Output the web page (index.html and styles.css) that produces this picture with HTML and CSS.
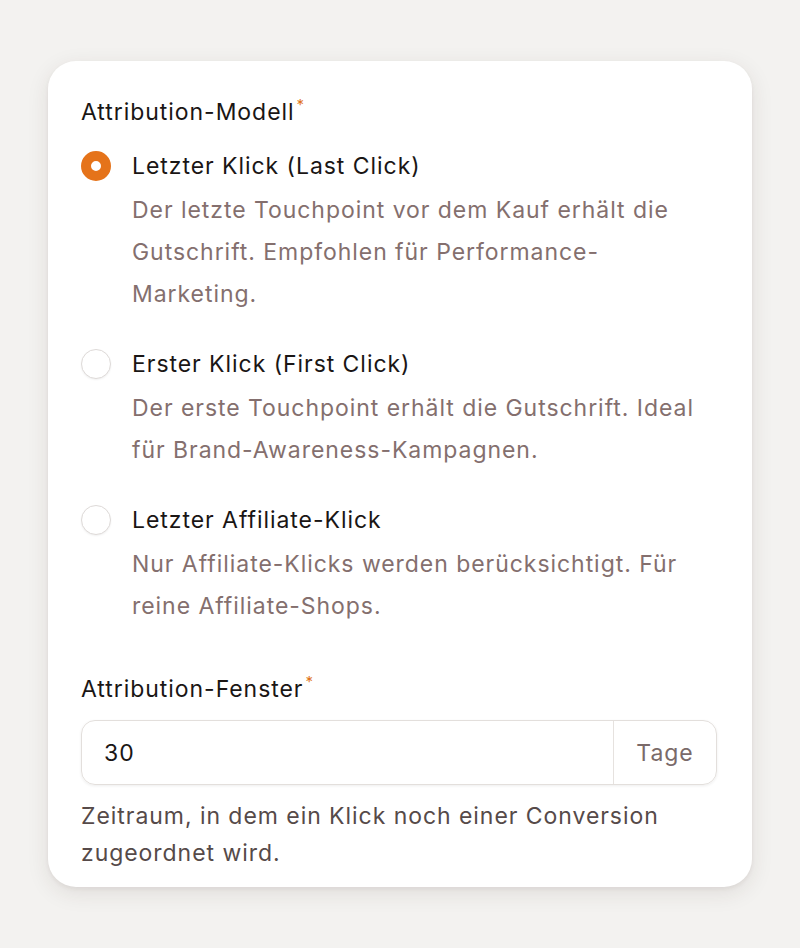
FILE: index.html
```html
<!DOCTYPE html>
<html lang="de">
<head>
<meta charset="utf-8">
<link rel="stylesheet" href="styles.css">
</head>
<body>
<div class="card">
  <div class="field">
    <div class="label">Attribution-Modell<span class="req">*</span></div>
    <div class="options">
      <div class="option">
        <span class="radio checked"></span>
        <div class="opt-body">
          <div class="opt-title">Letzter Klick (Last Click)</div>
          <div class="opt-desc">Der letzte Touchpoint vor dem Kauf erhält die Gutschrift. Empfohlen für Performance-Marketing.</div>
        </div>
      </div>
      <div class="option">
        <span class="radio"></span>
        <div class="opt-body">
          <div class="opt-title">Erster Klick (First Click)</div>
          <div class="opt-desc">Der erste Touchpoint erhält die Gutschrift. Ideal für Brand-Awareness-Kampagnen.</div>
        </div>
      </div>
      <div class="option">
        <span class="radio"></span>
        <div class="opt-body">
          <div class="opt-title">Letzter Affiliate-Klick</div>
          <div class="opt-desc">Nur Affiliate-Klicks werden berücksichtigt. Für reine Affiliate-Shops.</div>
        </div>
      </div>
    </div>
  </div>
  <div class="field field2">
    <div class="label">Attribution-Fenster<span class="req">*</span></div>
    <div class="input-group">
      <div class="input-value">30</div>
      <div class="addon">Tage</div>
    </div>
    <div class="help">Zeitraum, in dem ein Klick noch einer Conversion zugeordnet wird.</div>
  </div>
</div>
</body>
</html>
```
FILE: styles.css
```css
* { box-sizing: border-box; }
html, body { margin: 0; padding: 0; }
body {
  background: #f3f2f0;
  font-family: Inter, "Noto Sans", sans-serif;
  font-size: 23px;
  letter-spacing: 0.95px;
  padding: 61px 48px 0 48px;
  min-height: 948px;
}
.card {
  background: #ffffff;
  border-radius: 28px;
  box-shadow: 0 2px 4px rgba(60, 40, 30, 0.06), 0 6px 22px rgba(60, 40, 30, 0.10);
  padding: 36px 35px 15px 33px;
}
.label {
  line-height: 30px;
  color: #1a1615;
  font-weight: 400;
}
.req {
  color: #e0741c;
  font-size: 15px;
  line-height: 0;
  vertical-align: 10px;
  margin-left: 2px;
}
.options {
  display: flex;
  flex-direction: column;
  gap: 34px;
  margin-top: 24px;
}
.option {
  display: flex;
  gap: 21px;
  align-items: flex-start;
}
.radio {
  flex: 0 0 30px;
  width: 30px;
  height: 30px;
  border-radius: 50%;
  border: 1.5px solid #dedad8;
  background: #fff;
  box-shadow: 0 1px 2px rgba(0,0,0,0.06);
}
.radio.checked {
  border: 10px solid #e5731a;
  background: #fff;
  box-shadow: none;
}
.opt-body { flex: 1; }
.opt-title {
  line-height: 30px;
  color: #1a1615;
  font-weight: 400;
}
.opt-desc {
  line-height: 42px;
  color: #846f6e;
  margin-top: 8px;
}
.field2 { margin-top: 47px; }
.input-group {
  margin-top: 16px;
  display: flex;
  height: 65px;
  border: 1.5px solid #e3dfdc;
  border-radius: 14px;
  box-shadow: 0 1px 3px rgba(0,0,0,0.07);
  overflow: hidden;
}
.input-value {
  flex: 1;
  display: flex;
  align-items: center;
  padding-left: 22px;
  color: #1a1615;
}
.addon {
  width: 103px;
  border-left: 1.5px solid #e6e2df;
  display: flex;
  align-items: center;
  justify-content: center;
  color: #7a6a69;
}
.help {
  margin-top: 13px;
  line-height: 37px;
  color: #564a49;
}
```
